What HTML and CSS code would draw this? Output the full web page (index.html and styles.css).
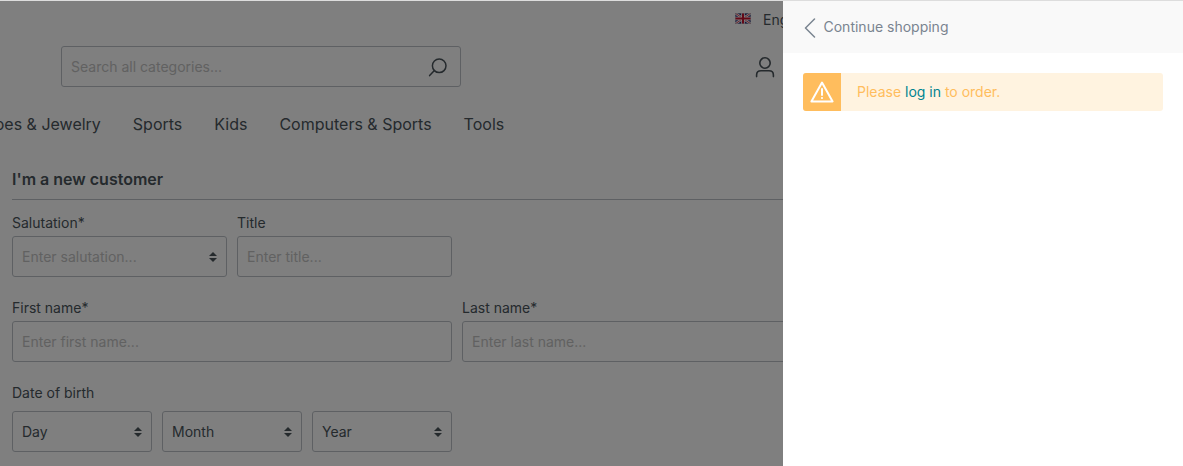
FILE: index.html
```html
<!DOCTYPE html>
<html lang="en">
<head>
    <meta charset="UTF-8">
    <meta name="viewport" content="width=device-width, initial-scale=1.0">
    <title>Register</title>
    <link rel="stylesheet" href="styles.css">
</head>
<body>
    <div class="page">
        <div class="top-bar">
            <svg class="flag" viewBox="0 0 16 11" width="16" height="11">
                <rect width="16" height="11" fill="#2b2f7a"/>
                <path d="M0 0L16 11M16 0L0 11" stroke="#fff" stroke-width="2.4"/>
                <path d="M0 0L16 11M16 0L0 11" stroke="#c8102e" stroke-width="0.8"/>
                <path d="M8 0V11M0 5.5H16" stroke="#fff" stroke-width="3.6"/>
                <path d="M8 0V11M0 5.5H16" stroke="#c8102e" stroke-width="2"/>
                <rect x="0.25" y="0.25" width="15.5" height="10.5" fill="none" stroke="#bcc1c7" stroke-width="0.5"/>
            </svg>
            <span class="lang">English</span>
        </div>

        <div class="header-row">
            <div class="search">
                <input class="search-input" type="text" placeholder="Search all categories...">
                <svg class="search-icon" viewBox="0 0 20 20" width="20" height="20" fill="none" stroke="#4a545b" stroke-width="1.5">
                    <circle cx="11.2" cy="8.8" r="6.8"/>
                    <path d="M6.4 13.6L1.6 18.6" stroke-linecap="round"/>
                </svg>
            </div>
            <svg class="user-icon" viewBox="0 0 20 22" width="20" height="22" fill="none" stroke="#4a545b" stroke-width="1.6">
                <circle cx="10" cy="7" r="5.2"/>
                <path d="M1.6 20.6V19C1.6 16 3.6 14.8 6 14.8H14C16.4 14.8 18.4 16 18.4 19V20.6" stroke-linecap="round"/>
            </svg>
        </div>

        <nav class="main-nav">
            <a href="#">Shoes &amp; Jewelry</a>
            <a href="#">Sports</a>
            <a href="#">Kids</a>
            <a href="#">Computers &amp; Sports</a>
            <a href="#">Tools</a>
        </nav>

        <form class="register-form">
            <h2 class="form-title">I'm a new customer</h2>

            <div class="form-row">
                <div class="field">
                    <label>Salutation*</label>
                    <select class="select placeholder"><option>Enter salutation...</option></select>
                </div>
                <div class="field">
                    <label>Title</label>
                    <input type="text" placeholder="Enter title...">
                </div>
            </div>

            <div class="form-row">
                <div class="field wide">
                    <label>First name*</label>
                    <input type="text" placeholder="Enter first name...">
                </div>
                <div class="field wide">
                    <label>Last name*</label>
                    <input type="text" placeholder="Enter last name...">
                </div>
            </div>

            <div class="date-group">
                <label>Date of birth</label>
                <div class="date-row">
                    <select class="select"><option>Day</option></select>
                    <select class="select"><option>Month</option></select>
                    <select class="select"><option>Year</option></select>
                </div>
            </div>
        </form>
    </div>

    <div class="backdrop"></div>

    <aside class="offcanvas">
        <a class="continue" href="#">
            <svg viewBox="0 0 12 20" width="12" height="20" fill="none" stroke="#798490" stroke-width="1.5">
                <path d="M10.5 1L1.5 10L10.5 19" stroke-linecap="round" stroke-linejoin="round"/>
            </svg>
            <span>Continue shopping</span>
        </a>
        <div class="offcanvas-body">
            <div class="alert">
                <div class="alert-icon">
                    <svg viewBox="0 0 24 22" width="24" height="22" fill="none" stroke="#fff" stroke-width="2">
                        <path d="M12 1.6L22.6 20.4H1.4Z" stroke-linejoin="round"/>
                        <path d="M12 8V14" stroke-linecap="round" stroke-width="2"/>
                        <circle cx="12" cy="17" r="1.1" fill="#fff" stroke="none"/>
                    </svg>
                </div>
                <p class="alert-text">Please <a href="#">log in</a> to order.</p>
            </div>
        </div>
    </aside>
</body>
</html>
```

FILE: styles.css
```css
* {
  box-sizing: border-box;
}

html, body {
  height: 100%;
}

body {
  font-family: Inter, "Liberation Sans", sans-serif;
  font-size: 14px;
  color: #4a545b;
  margin: 0;
  background-color: #fff;
  overflow: hidden;
}

.page {
  width: 100%;
  height: 466px;
  overflow: hidden;
  border-top: 1px solid #ddd;
}

.top-bar {
  display: flex;
  align-items: center;
  height: 37px;
  padding-left: 735px;
  white-space: nowrap;
}

.flag {
  flex-shrink: 0;
  margin-right: 12px;
  margin-bottom: 2px;
}

.header-row {
  display: flex;
  align-items: center;
  height: 41px;
  margin-top: 8px;
  padding-left: 61px;
}

.search {
  display: flex;
  align-items: center;
  width: 400px;
  height: 41px;
  border: 1px solid #bcc1c7;
  border-radius: 3px;
  padding-right: 12px;
}

.search-input {
  flex: 1;
  border: none;
  height: 39px;
  padding: 0 9px;
  font: inherit;
  outline: none;
  background: none;
}

.search-icon {
  flex-shrink: 0;
}

.user-icon {
  margin-left: 294px;
}

.main-nav {
  display: flex;
  gap: 32px;
  margin-top: 27px;
  margin-left: -25px;
  font-size: 16px;
  line-height: 20px;
  white-space: nowrap;
}

.main-nav a {
  color: #4a545b;
  text-decoration: none;
}

.register-form {
  padding-left: 12px;
  margin-top: 35px;
}

.form-title {
  margin: 0 0 15px;
  padding-bottom: 10px;
  border-bottom: 1px solid #bcc1c7;
  font-size: 16px;
  line-height: 20px;
  font-weight: 600;
  width: 1000px;
}

.form-row {
  display: flex;
  gap: 10px;
  margin-bottom: 23px;
}

.field {
  width: 215px;
}

.field.wide {
  width: 440px;
}

label {
  display: block;
  line-height: 16px;
  margin-bottom: 5px;
}

input, select {
  font: inherit;
  color: #4a545b;
}

.field input, .select {
  display: block;
  width: 100%;
  height: 41px;
  padding: 0 9px;
  border: 1px solid #bcc1c7;
  border-radius: 3px;
  background-color: #fff;
  outline: none;
}

input::placeholder {
  color: #c3c3c3;
  opacity: 1;
}

.select {
  appearance: none;
  background-image: url("data:image/svg+xml,%3Csvg xmlns='http://www.w3.org/2000/svg' viewBox='0 0 8 10'%3E%3Cpath fill='%234a545b' d='M4 0L8 4H0ZM4 10L0 6H8Z'/%3E%3C/svg%3E");
  background-repeat: no-repeat;
  background-position: right 9px center;
  background-size: 8px 10px;
}

.select.placeholder {
  color: #c3c3c3;
}

.date-row {
  display: flex;
  gap: 10px;
  width: 440px;
  margin-top: 10px;
}

.date-row .select {
  flex: 1;
}

.backdrop {
  position: absolute;
  top: 1px;
  left: 0;
  right: 0;
  bottom: 0;
  background-color: rgba(0, 0, 0, 0.5);
}

.offcanvas {
  position: absolute;
  top: 1px;
  right: 0;
  bottom: 0;
  width: 400px;
  background-color: #fff;
}

.continue {
  display: flex;
  align-items: center;
  gap: 7.5px;
  height: 52px;
  padding-left: 21px;
  padding-bottom: 1px;
  background-color: #f9f9f9;
  color: #798490;
  text-decoration: none;
}

.continue svg {
  margin-top: 2px;
}

.offcanvas-body {
  padding: 20px;
}

.alert {
  display: flex;
  height: 38px;
  background-color: #fff3e0;
  border-radius: 3px;
  overflow: hidden;
}

.alert-icon {
  display: flex;
  align-items: center;
  justify-content: center;
  width: 38px;
  background-color: #ffbd5d;
}

.alert-text {
  margin: 0;
  padding-left: 16px;
  line-height: 38px;
  color: #ffbd5d;
}

.alert-text a {
  color: #008490;
  text-decoration: none;
}
```
